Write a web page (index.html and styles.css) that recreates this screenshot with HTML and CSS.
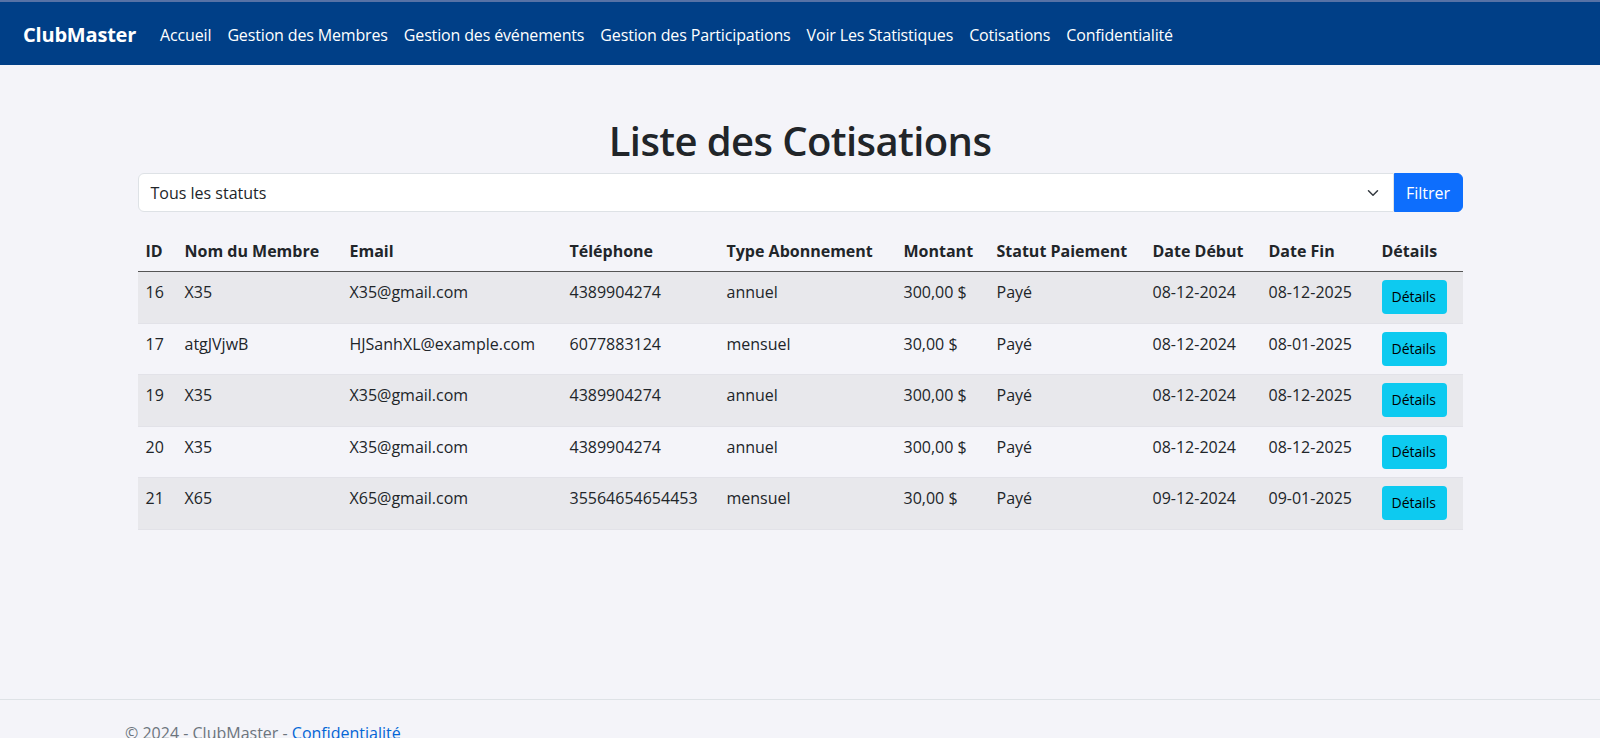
FILE: index.html
```html
<!DOCTYPE html>
<html lang="fr">
<head>
<meta charset="utf-8">
<title>Liste des Cotisations - ClubMaster</title>
<link rel="stylesheet" href="styles.css">
</head>
<body>
<nav class="navbar">
  <a class="brand" href="#">ClubMaster</a>
  <ul class="nav">
    <li><a class="nav-link" href="#">Accueil</a></li>
    <li><a class="nav-link" href="#">Gestion des Membres</a></li>
    <li><a class="nav-link" href="#">Gestion des événements</a></li>
    <li><a class="nav-link" href="#">Gestion des Participations</a></li>
    <li><a class="nav-link" href="#">Voir Les Statistiques</a></li>
    <li><a class="nav-link" href="#">Cotisations</a></li>
    <li><a class="nav-link" href="#">Confidentialité</a></li>
  </ul>
</nav>
<main class="main">
  <div class="container">
    <h1 class="title">Liste des Cotisations</h1>
    <form class="filter">
      <div class="select">
        <span>Tous les statuts</span>
        <svg class="chevron" width="12" height="8" viewBox="0 0 12 8"><path d="M1.5 1.8 6 6.2l4.5-4.4" fill="none" stroke="#343a40" stroke-width="1.5" stroke-linecap="round" stroke-linejoin="round"/></svg>
      </div>
      <button class="btn-filter" type="button">Filtrer</button>
    </form>
    <table class="table">
      <colgroup>
        <col class="c-id"><col class="c-nom"><col class="c-email"><col class="c-tel"><col class="c-type"><col class="c-montant"><col class="c-statut"><col class="c-debut"><col class="c-fin"><col class="c-details">
      </colgroup>
      <thead>
        <tr><th>ID</th><th>Nom du Membre</th><th>Email</th><th>Téléphone</th><th>Type Abonnement</th><th>Montant</th><th>Statut Paiement</th><th>Date Début</th><th>Date Fin</th><th>Détails</th></tr>
      </thead>
      <tbody>
        <tr><td>16</td><td>X35</td><td>X35@gmail.com</td><td>4389904274</td><td>annuel</td><td>300,00 $</td><td>Payé</td><td>08-12-2024</td><td>08-12-2025</td><td><a class="btn-details" href="#">Détails</a></td></tr>
        <tr><td>17</td><td>atgJVjwB</td><td>HJSanhXL@example.com</td><td>6077883124</td><td>mensuel</td><td>30,00 $</td><td>Payé</td><td>08-12-2024</td><td>08-01-2025</td><td><a class="btn-details" href="#">Détails</a></td></tr>
        <tr><td>19</td><td>X35</td><td>X35@gmail.com</td><td>4389904274</td><td>annuel</td><td>300,00 $</td><td>Payé</td><td>08-12-2024</td><td>08-12-2025</td><td><a class="btn-details" href="#">Détails</a></td></tr>
        <tr><td>20</td><td>X35</td><td>X35@gmail.com</td><td>4389904274</td><td>annuel</td><td>300,00 $</td><td>Payé</td><td>08-12-2024</td><td>08-12-2025</td><td><a class="btn-details" href="#">Détails</a></td></tr>
        <tr><td>21</td><td>X65</td><td>X65@gmail.com</td><td>35564654654453</td><td>mensuel</td><td>30,00 $</td><td>Payé</td><td>09-12-2024</td><td>09-01-2025</td><td><a class="btn-details" href="#">Détails</a></td></tr>
      </tbody>
    </table>
  </div>
</main>
<footer class="footer">
  <div class="footer-inner">© 2024 - ClubMaster - <a class="footer-link" href="#">Confidentialité</a></div>
</footer>
</body>
</html>
```
FILE: styles.css
```css
* { box-sizing: border-box; }
html, body { margin: 0; padding: 0; height: 100%; overflow: hidden; }
body {
  background: #f4f4f9;
  color: #212529;
  font-family: "Open Sans", "Noto Sans", sans-serif;
  font-size: 16px;
  line-height: 1.5;
}
a { text-decoration: none; }

.navbar {
  height: 65px;
  background: #003f87;
  border-top: 2px solid #5672a6;
  display: flex;
  align-items: center;
  padding: 3px 0 0 23px;
}
.brand {
  color: #fff;
  font-weight: 700;
  font-size: 20px;
  margin-right: 16px;
  letter-spacing: -0.2px;
}
.nav { list-style: none; margin: 0; padding: 0; display: flex; }
.nav-link { color: #fff; padding: 8px 8px; display: block; letter-spacing: -0.15px; }

.main { height: 634px; }
.container { width: 1325px; margin: 0 auto; padding-top: 52px; }
.title {
  font-size: 40px;
  font-weight: 600;
  letter-spacing: -0.6px;
  line-height: 1.2;
  text-align: center;
  margin: 0 0 8px;
  color: #212529;
}
.filter { display: flex; height: 39px; margin: 0 0 19px; }
.select {
  flex: 1;
  display: flex;
  align-items: center;
  justify-content: space-between;
  background: #fff;
  border: 1px solid #dee2e6;
  border-radius: 6px 0 0 6px;
  padding: 0 14px 0 12px;
  color: #212529;
}
.btn-filter {
  width: 69px;
  background: #0d6efd;
  color: #fff;
  border: 1px solid #0d6efd;
  border-radius: 0 6px 6px 0;
  font: inherit;
  padding: 0;
}

.table { width: 1325px; border-collapse: collapse; table-layout: fixed; }
.c-id { width: 39px; }
.c-nom { width: 165px; }
.c-email { width: 220px; }
.c-tel { width: 157px; }
.c-type { width: 177px; }
.c-montant { width: 93px; }
.c-statut { width: 156px; }
.c-debut { width: 116px; }
.c-fin { width: 113px; }
.c-details { width: 89px; }
.table th {
  text-align: left;
  font-weight: 700;
  padding: 8px;
  border-bottom: 1px solid #555;
  white-space: nowrap;
}
.table td {
  padding: 8px 8px 8.5px;
  border-bottom: 1px solid #e2e2e8;
  white-space: nowrap;
  vertical-align: top;
}
.table tbody tr:nth-child(odd) td { background: #e8e8ec; }
.btn-details {
  display: inline-block;
  background: #0dcaf0;
  color: #000;
  font-size: 14px;
  line-height: 22px;
  padding: 6px 11px 6px 10px;
  border-radius: 4px;
}

.footer {
  border-top: 1px solid #dee2e6;
  line-height: 60px;
  color: #6c757d;
  white-space: nowrap;
}
.footer-inner { padding: 3px 0 0 125px; }
.footer-link { color: #0366d6; }
```
